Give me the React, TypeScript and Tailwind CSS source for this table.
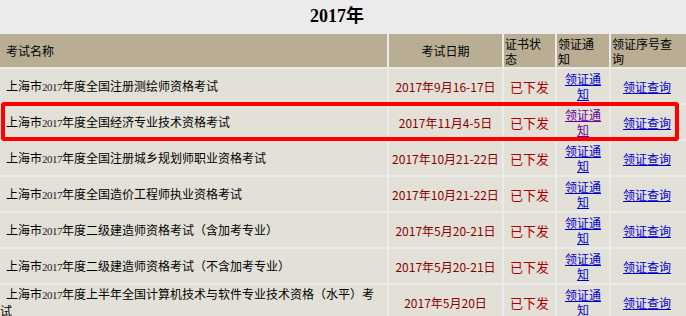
const rows = [
  { name: "年度全国注册测绘师资格考试", date: "2017年9月16-17日", visited: false },
  { name: "年度全国经济专业技术资格考试", date: "2017年11月4-5日", visited: true },
  { name: "年度全国注册城乡规划师职业资格考试", date: "2017年10月21-22日", visited: false },
  { name: "年度全国造价工程师执业资格考试", date: "2017年10月21-22日", visited: false },
  { name: "年度二级建造师资格考试（含加考专业）", date: "2017年5月20-21日", visited: false },
  { name: "年度二级建造师资格考试（不含加考专业）", date: "2017年5月20-21日", visited: false },
  { name: "年度上半年全国计算机技术与软件专业技术资格（水平）考试", date: "2017年5月20日", visited: false },
];

export default function App() {
  return (
    <div className="relative w-[686px] h-[316px] overflow-hidden bg-[#ebebeb] text-[12px] leading-[15px] text-black font-['Noto_Sans_CJK_SC',sans-serif]">
      <div className="h-[32px] flex items-center justify-center pr-[12px] text-[18px] font-bold font-['Liberation_Serif','Noto_Sans_CJK_SC',serif]">
        2017年
      </div>

      <table className="ml-[-4px] w-[697px] table-fixed border-separate border-spacing-[2px]">
        <colgroup>
          <col className="w-[389px]" />
          <col className="w-[113px]" />
          <col className="w-[51px]" />
          <col className="w-[52px]" />
          <col className="w-[80px]" />
        </colgroup>
        <thead>
          <tr className="h-[33px] bg-[#b9ae94]">
            <th className="p-0 pl-[2px] indent-[6px] text-left font-normal">考试名称</th>
            <th className="p-0 text-center font-normal">考试日期</th>
            <th className="p-0 pl-[1px] text-left font-normal">证书状<br />态</th>
            <th className="p-0 pl-[1px] text-left font-normal">领证通<br />知</th>
            <th className="p-0 pl-[1px] text-left font-normal">领证序号查<br />询</th>
          </tr>
        </thead>
        <tbody>
          {rows.map((row, i) => (
            <tr key={i} className="h-[34px] bg-[#e3e0d8]">
              <td className="p-0 pl-[2px] pr-[2px] indent-[6px] text-left">
                上海市<span className="font-['Liberation_Serif',serif] text-[11px] tracking-[-0.5px] text-[#222]">2017</span>{row.name}
              </td>
              <td className="p-0 text-center text-[#8b0000]">{row.date}</td>
              <td className="p-0 text-center text-[13px] text-[#b00000]">已下发</td>
              <td className="p-0 text-center">
                <a
                  href="#"
                  className={`underline ${row.visited ? "text-[#660099]" : "text-[#0000cc]"}`}
                >
                  领证通<br />知
                </a>
              </td>
              <td className="p-0 pr-[8px] text-center">
                <a href="#" className="underline text-[#0000cc]">领证查询</a>
              </td>
            </tr>
          ))}
        </tbody>
      </table>

      <div className="absolute left-[1px] top-[102px] w-[678px] h-[39px] rounded-[3px] border-[4px] border-[#ff0000]" />
    </div>
  );
}
